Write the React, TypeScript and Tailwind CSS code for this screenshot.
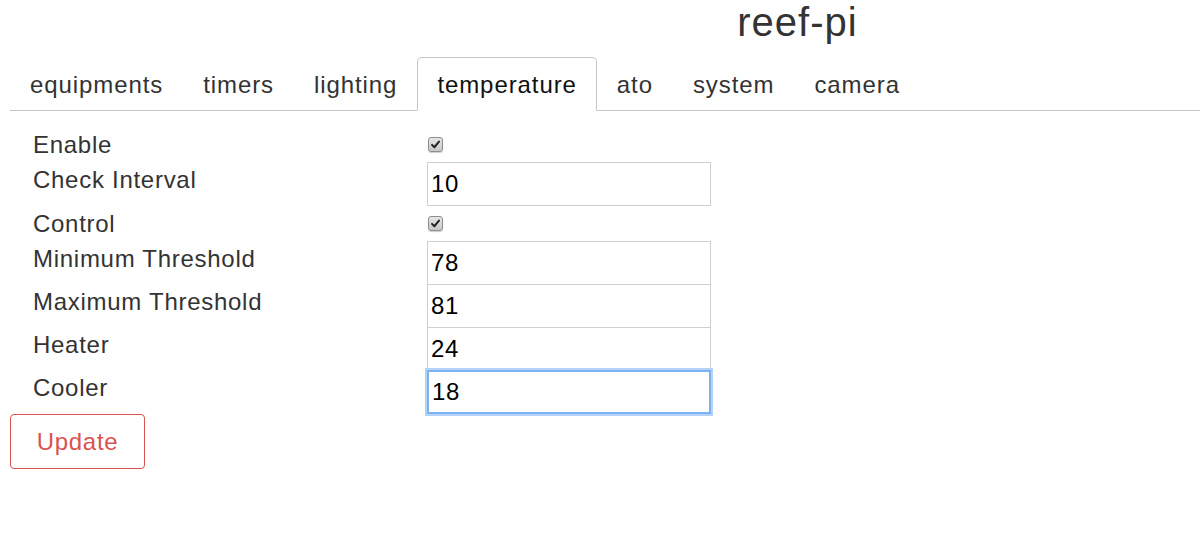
import { useState } from 'react';

type Field =
  | { kind: 'check'; label: string; value: boolean }
  | { kind: 'text'; label: string; value: string; focused?: boolean };

const TABS = ['equipments', 'timers', 'lighting', 'temperature', 'ato', 'system', 'camera'];

const FIELDS: Field[] = [
  { kind: 'check', label: 'Enable', value: true },
  { kind: 'text', label: 'Check Interval', value: '10' },
  { kind: 'check', label: 'Control', value: true },
  { kind: 'text', label: 'Minimum Threshold', value: '78' },
  { kind: 'text', label: 'Maximum Threshold', value: '81' },
  { kind: 'text', label: 'Heater', value: '24' },
  { kind: 'text', label: 'Cooler', value: '18', focused: true },
];

function CheckBox({ checked }: { checked: boolean }) {
  return (
    <span
      role="checkbox"
      aria-checked={checked}
      className="ml-px flex h-[15px] w-[15px] items-center justify-center rounded-[3px] border border-[#8e8e8e] bg-gradient-to-b from-[#e6e6e6] to-[#c8c8c8] shadow-[0_1px_1px_rgba(0,0,0,0.2)]"
    >
      {checked && (
        <svg viewBox="0 0 12 12" className="h-[11px] w-[11px]">
          <path d="M2.2 6.4 L4.8 9 L9.8 2.8" fill="none" stroke="#262626" strokeWidth="2.2" strokeLinecap="round" strokeLinejoin="round" />
        </svg>
      )}
    </span>
  );
}

export default function App() {
  const [active] = useState('temperature');

  return (
    <div className="min-h-screen bg-white font-['Liberation_Sans',Arial,sans-serif] tracking-[0.045em] text-[#333]">
      {/* Header */}
      <div className="flex h-[57px]">
        <div className="w-[395px] shrink-0" />
        <h1 className="flex-1 text-center text-[40px] leading-[44px] font-normal tracking-[0.025em] text-[#333]">reef-pi</h1>
      </div>

      {/* Tabs */}
      <ul className="ml-[10px] flex border-b border-[#c6c6c6]">
        {TABS.map((tab) => (
          <li
            key={tab}
            className={`-mb-px h-[54px] rounded-t-[5px] border px-[19px] text-[24px] leading-[54px] tracking-[0.038em] ${
              tab === active
                ? 'border-[#c6c6c6] border-b-white bg-white text-[#111]'
                : 'border-transparent text-[#333]'
            }`}
          >
            {tab}
          </li>
        ))}
      </ul>

      {/* Temperature settings */}
      <form className="mt-4 flex flex-col" onSubmit={(e) => e.preventDefault()}>
        {FIELDS.map((f, i) => {
          const prevText = i > 0 && FIELDS[i - 1].kind === 'text';
          if (f.kind === 'check') {
            return (
              <div key={f.label} className="flex h-[35px] items-center pl-[33px]">
                <label className="w-[394px] text-[24px] leading-[35px]">{f.label}</label>
                <CheckBox checked={f.value} />
              </div>
            );
          }
          return (
            <div key={f.label} className={`flex items-start pl-[33px] ${prevText ? '-mt-px' : ''}`}>
              <label className="w-[394px] text-[24px] leading-[36px]">{f.label}</label>
              <input
                readOnly
                value={f.value}
                className={`h-[44px] w-[284px] bg-white pl-[3px] text-[24px] tracking-[0.03em] text-black outline-none ${
                  f.focused
                    ? 'relative border-2 border-[#7db2f2] shadow-[0_0_0_2px_#b4d2f6]'
                    : 'border border-[#cfcfcf]'
                }`}
              />
            </div>
          );
        })}
        <div className="ml-[10px]">
          <button
            type="submit"
            className="h-[55px] w-[135px] rounded-[4px] border border-[#d9534f] bg-white text-center text-[24px] text-[#d9534f]"
          >
            Update
          </button>
        </div>
      </form>
    </div>
  );
}
